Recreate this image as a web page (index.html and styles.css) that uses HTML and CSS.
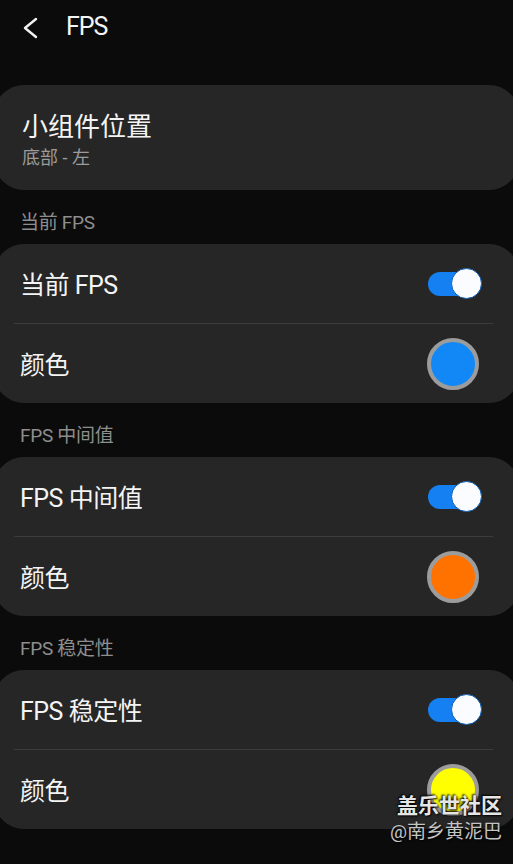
FILE: index.html
```html
<!DOCTYPE html>
<html lang="zh">
<head>
<meta charset="utf-8">
<link rel="stylesheet" href="styles.css">
</head>
<body>
<div class="page">
  <header class="header">
    <svg class="back" width="16" height="22" viewBox="0 0 16 22"><path d="M14 2 L3 11 L14 20" fill="none" stroke="#f2f2f2" stroke-width="2.4" stroke-linecap="round" stroke-linejoin="round"/></svg>
    <span class="title">FPS</span>
  </header>

  <div class="card single">
    <div class="main">小组件位置</div>
    <div class="sub">底部 - 左</div>
  </div>

  <div class="label">当前 FPS</div>
  <div class="card">
    <div class="row">
      <span class="text">当前 FPS</span>
      <span class="switch"><span class="knob"></span></span>
    </div>
    <div class="divider"></div>
    <div class="row">
      <span class="text">颜色</span>
      <span class="swatch blue"></span>
    </div>
  </div>

  <div class="label">FPS 中间值</div>
  <div class="card">
    <div class="row">
      <span class="text">FPS 中间值</span>
      <span class="switch"><span class="knob"></span></span>
    </div>
    <div class="divider"></div>
    <div class="row">
      <span class="text">颜色</span>
      <span class="swatch orange"></span>
    </div>
  </div>

  <div class="label">FPS 稳定性</div>
  <div class="card">
    <div class="row">
      <span class="text">FPS 稳定性</span>
      <span class="switch"><span class="knob"></span></span>
    </div>
    <div class="divider"></div>
    <div class="row">
      <span class="text">颜色</span>
      <span class="swatch yellow"></span>
    </div>
  </div>

  <div class="watermark">
    <div class="wm-main">盖乐世社区</div>
    <div class="wm-sub">@南乡黄泥巴</div>
  </div>
</div>
</body>
</html>
```

FILE: styles.css
```css
html, body {
  margin: 0;
  padding: 0;
  background: #0b0b0b;
}
body {
  width: 513px;
  height: 864px;
  overflow: hidden;
  font-family: "Roboto", "Noto Sans CJK SC", sans-serif;
  color: #f2f2f2;
}
.page {
  position: relative;
  width: 513px;
  height: 864px;
  overflow: hidden;
}
.header {
  height: 54px;
  display: flex;
  align-items: center;
  padding-left: 22px;
}
.back {
  display: block;
  margin-top: 1px;
}
.title {
  margin-left: 28px;
  font-size: 25px;
  line-height: 30px;
  letter-spacing: -1px;
  color: #f4f4f4;
}
.card {
  margin: 0 -6px;
  background: #262626;
  border-radius: 30px;
}
.single {
  margin-top: 31px;
  height: 105px;
  box-sizing: border-box;
  padding: 27px 26px 0 28px;
}
.main {
  font-size: 26px;
  line-height: 30px;
  color: #f4f4f4;
}
.sub {
  margin-top: 4px;
  font-size: 18px;
  line-height: 24px;
  color: #9b9b9b;
}
.label {
  padding: 21px 20px 9px 20px;
  font-size: 19px;
  line-height: 24px;
  color: #8e8e8e;
  letter-spacing: -0.3px;
}
.row {
  height: 79px;
  display: flex;
  align-items: center;
  justify-content: space-between;
  padding: 0 36px 0 26px;
}
.text {
  padding-top: 4px;
  font-size: 25px;
  line-height: 30px;
  letter-spacing: -0.5px;
  color: #f4f4f4;
}
.divider {
  height: 1px;
  background: #3c3c3c;
  margin: 0 26px 0 20px;
}
.switch {
  position: relative;
  width: 42px;
  height: 24px;
  border-radius: 12px;
  background: #1580f2;
  margin-right: 13px;
}
.knob {
  position: absolute;
  left: 23px;
  top: -4px;
  width: 29px;
  height: 29px;
  border-radius: 50%;
  background: #fafcff;
  border: 1px solid #0c5fb8;
}
.swatch {
  width: 44px;
  height: 44px;
  border-radius: 50%;
  border: 4px solid #9c9c9c;
  margin-right: 4px;
}
.blue { background: #1288f6; }
.orange { background: #ff7200; }
.yellow { background: #ffff00; }
.watermark {
  position: absolute;
  right: 11px;
  top: 792px;
  text-align: right;
}
.wm-main {
  font-size: 21px;
  line-height: 28px;
  font-weight: 700;
  color: #e6e6e6;
  text-shadow: 1px 1px 2px #000, -1px -1px 2px #000;
}
.wm-sub {
  font-size: 19px;
  line-height: 24px;
  color: #c4c4c4;
  text-shadow: 1px 1px 2px #000;
}
```
